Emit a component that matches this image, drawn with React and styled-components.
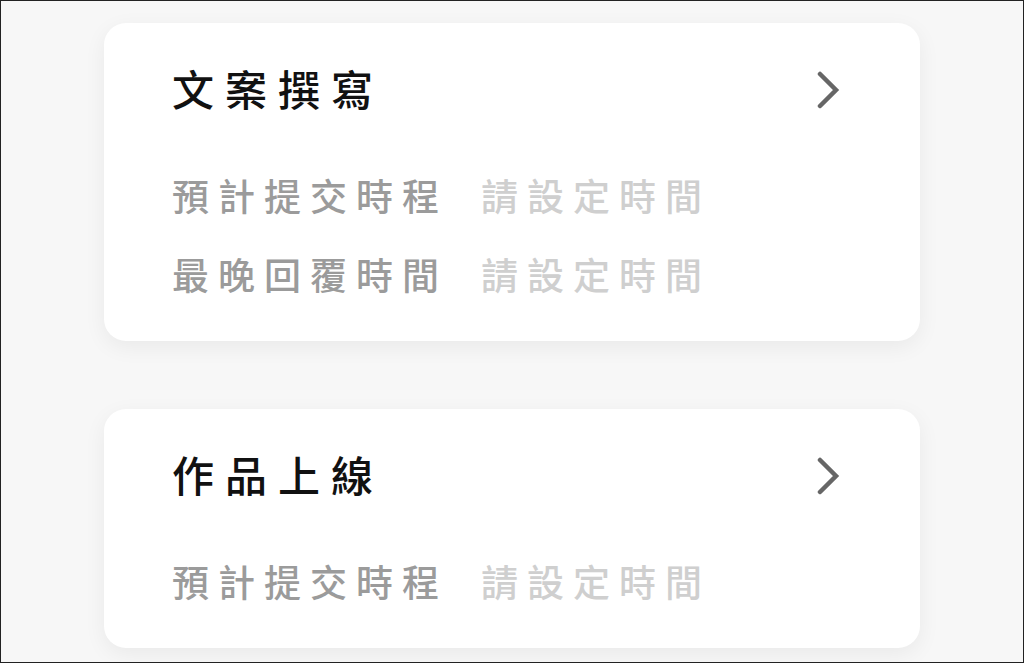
import React from "react";
import styled, { createGlobalStyle } from "styled-components";

const Global = createGlobalStyle`
  html, body { margin: 0; padding: 0; }
  body {
    background: #f7f7f7;
    font-family: "Noto Sans CJK TC", "Noto Sans CJK SC", "Noto Sans", sans-serif;
  }
`;

const Page = styled.div`
  box-sizing: border-box;
  width: 1024px;
  height: 663px;
  overflow: hidden;
  border: 1px solid #222;
  padding: 22px 103px 0 103px;
  display: flex;
  flex-direction: column;
  gap: 68px;
  background: #f7f7f7;
`;

const Card = styled.section`
  background: #fff;
  border-radius: 22px;
  box-shadow: 0 6px 22px rgba(0, 0, 0, 0.06);
  padding: 22px 79px 28px 68px;
  display: flex;
  flex-direction: column;
`;

const Header = styled.div`
  display: flex;
  align-items: center;
  justify-content: space-between;
  height: 86px;
  margin-bottom: 24px;
`;

const Title = styled.h2`
  margin: 0;
  font-size: 42px;
  font-weight: 500;
  letter-spacing: 11px;
  color: #111;
  line-height: 1;
`;

const ChevronIcon = styled.svg`
  margin-top: 4px;
  flex: none;
`;

const Row = styled.div`
  box-sizing: border-box;
  display: flex;
  align-items: center;
  height: 79px;
  padding-top: 2px;
  font-size: 37px;
  font-weight: 500;
  letter-spacing: 9px;
  line-height: 1;
`;

const Label = styled.span`
  color: #9b9b9b;
  margin-right: 33px;
`;

const Value = styled.span`
  color: #cfcfcf;
`;

const Chevron = () => (
  <ChevronIcon width="24" height="38" viewBox="0 0 24 38" fill="none">
    <path d="M3 3 L19 19 L3 35" stroke="#666" strokeWidth="4.5" strokeLinecap="round" strokeLinejoin="miter" />
  </ChevronIcon>
);

const data = [
  { title: "文案撰寫", rows: [["預計提交時程", "請設定時間"], ["最晚回覆時間", "請設定時間"]] },
  { title: "作品上線", rows: [["預計提交時程", "請設定時間"]] },
];

export default function App() {
  return (
    <>
      <Global />
      <Page>
        {data.map((c) => (
          <Card key={c.title}>
            <Header>
              <Title>{c.title}</Title>
              <Chevron />
            </Header>
            {c.rows.map(([l, v]) => (
              <Row key={l}>
                <Label>{l}</Label>
                <Value>{v}</Value>
              </Row>
            ))}
          </Card>
        ))}
      </Page>
    </>
  );
}
